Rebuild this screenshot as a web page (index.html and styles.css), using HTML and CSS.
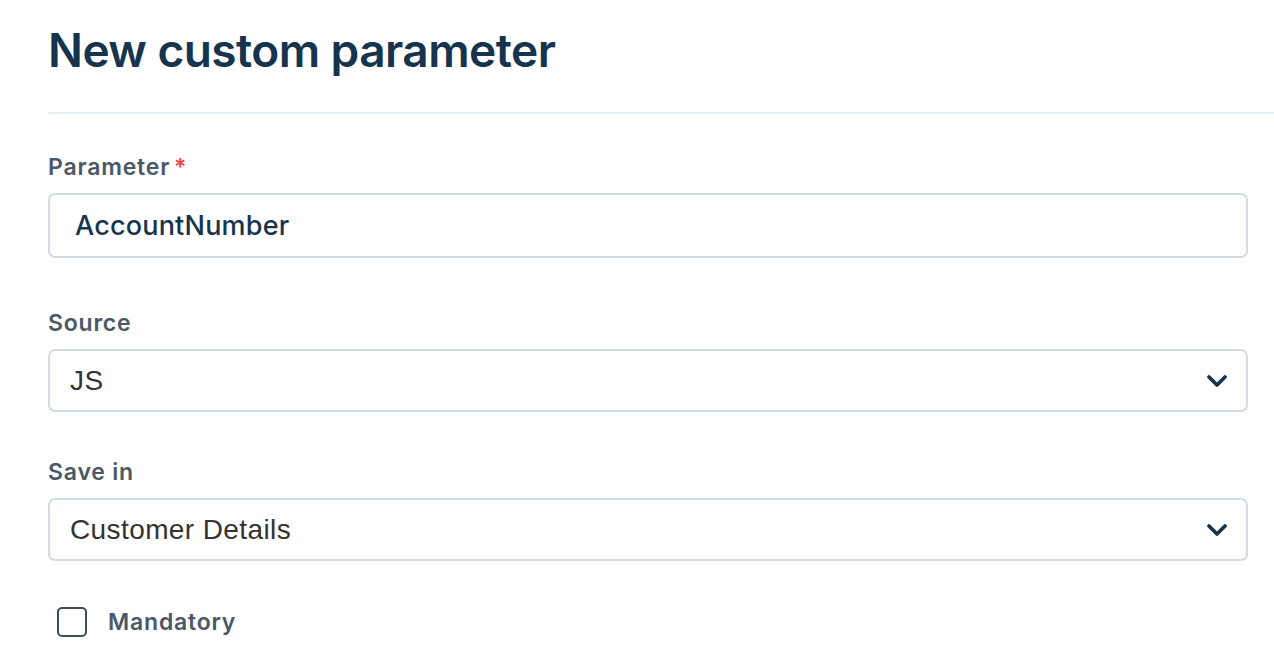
FILE: index.html
```html
<!DOCTYPE html>
<html>
<head>
<meta charset="utf-8">
<link rel="stylesheet" href="styles.css">
</head>
<body>
<div class="page">
  <h1 class="title">New custom parameter</h1>
  <div class="divider"></div>
  <div class="form">
    <div class="field field-text">
      <label class="label">Parameter<span class="req">*</span></label>
      <div class="input">AccountNumber</div>
    </div>
    <div class="field">
      <label class="label">Source</label>
      <div class="select"><span class="value">JS</span>
        <svg class="chev" width="22" height="14" viewBox="0 0 22 14"><path d="M3 3 L11 11 L19 3" fill="none" stroke="#17344f" stroke-width="3.8" stroke-linecap="round" stroke-linejoin="round"/></svg>
      </div>
    </div>
    <div class="field">
      <label class="label">Save in</label>
      <div class="select"><span class="value">Customer Details</span>
        <svg class="chev" width="22" height="14" viewBox="0 0 22 14"><path d="M3 3 L11 11 L19 3" fill="none" stroke="#17344f" stroke-width="3.8" stroke-linecap="round" stroke-linejoin="round"/></svg>
      </div>
    </div>
    <div class="check">
      <span class="box"></span>
      <span class="check-label">Mandatory</span>
    </div>
  </div>
</div>
</body>
</html>
```

FILE: styles.css
```css
html, body {
  margin: 0;
  padding: 0;
  background: #ffffff;
}
body {
  font-family: Inter, "Noto Sans", sans-serif;
}
.page {
  padding: 20px 0 0 48px;
}
.title {
  margin: 0;
  font-size: 46px;
  font-weight: 600;
  color: #17344f;
  line-height: 60px;
  letter-spacing: -0.55px;
}
.divider {
  height: 2px;
  background: #e8edf2;
  margin-top: 32px;
}
.form {
  width: 1200px;
  padding-top: 39px;
}
.field {
  margin-bottom: 46px;
}
.field-text {
  margin-bottom: 51px;
}
.label {
  display: block;
  font-size: 23px;
  font-weight: 600;
  color: #4b5867;
  line-height: 28px;
  letter-spacing: 0.8px;
  margin-bottom: 12px;
}
.req {
  color: #e5484d;
  margin-left: 4px;
}
.input, .select {
  box-sizing: border-box;
  border: 2px solid #d3dbe3;
  border-radius: 7px;
  display: flex;
  align-items: center;
}
.input {
  height: 65px;
  padding-left: 25px;
  font-size: 27px;
  color: #17344f;
  font-weight: 500;
  letter-spacing: 0.2px;
}
.select {
  height: 63px;
  padding: 0 18px 0 20px;
  justify-content: space-between;
  font-family: "Liberation Sans", Arial, sans-serif;
  font-size: 28px;
  letter-spacing: 0.4px;
  color: #333333;
}
.chev {
  display: block;
}
.check {
  display: flex;
  align-items: center;
  padding-left: 9px;
}
.box {
  box-sizing: border-box;
  width: 30px;
  height: 30px;
  border: 2.5px solid #3e4c5b;
  border-radius: 5px;
}
.check-label {
  margin-left: 21px;
  font-size: 23px;
  font-weight: 600;
  letter-spacing: 0.8px;
  color: #4b5867;
}
```
